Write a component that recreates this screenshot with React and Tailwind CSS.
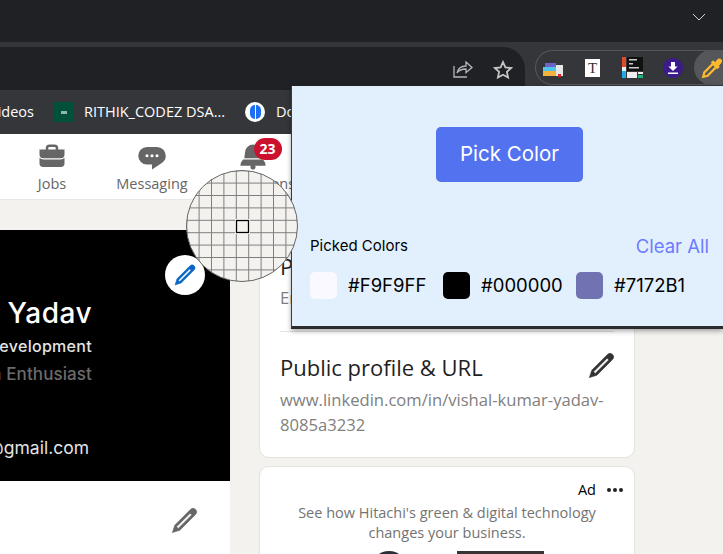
import React from "react";

const pencil = "M21.13 2.86a3 3 0 00-4.17 0l-13 13L2 22l6.19-2L21.13 7a3 3 0 000-4.16zM6.77 18.57l-1.35-1.34L16.64 6 18 7.35z";

const Pencil = ({ className }) => (
  <svg viewBox="0 0 24 24" className={className} fill="currentColor" stroke="currentColor" strokeWidth="0.5">
    <path d={pencil} />
  </svg>
);

const NavItem = ({ width, label, path, badge }) => (
  <div className={`${width} flex flex-col items-center pt-[8px]`}>
    <div className="relative">
      <svg viewBox="0 0 24 24" className="w-[30px] h-[30px] text-[#666666]" fill="currentColor">
        <path d={path} />
      </svg>
      {badge && (
        <span className="absolute -top-[4px] left-[16px] w-[28px] h-[22px] rounded-full bg-[#cb112d] text-white text-[14px] font-bold leading-[22px] text-center">
          {badge}
        </span>
      )}
    </div>
    <span className="text-[14.5px] leading-[20px] mt-[2px] text-[#666666] whitespace-nowrap">{label}</span>
  </div>
);

const Swatch = ({ color, code }) => (
  <div className="w-[133px] shrink-0 flex items-center gap-[11px]">
    <span className="w-[27px] h-[27px] rounded-[5px] shrink-0" style={{ backgroundColor: color }} />
    <span className="text-[18.5px] leading-[27px] text-black">{code}</span>
  </div>
);

const Extensions = () => (
  <div className="ml-[10px] flex-1 h-[35px] mt-[3px] rounded-l-full border border-r-0 border-[#55565a] flex items-center pl-[7px] relative">
    <svg viewBox="0 0 20 16" className="w-[20px] h-[16px] mt-[4px]">
      <rect x="0" y="5" width="13" height="4" fill="#4fc3e8" />
      <rect x="0" y="9" width="13" height="5" fill="#f2b33d" />
      <rect x="2" y="1" width="11" height="4" fill="#6a64c8" />
      <rect x="13" y="3" width="7" height="11" fill="#e6e6e6" />
      <rect x="15" y="12" width="3" height="3" fill="#d8262c" />
    </svg>
    <div className="w-[15px] h-[18px] ml-[22px] bg-white text-[#333333] text-[15px] leading-[18px] text-center" style={{ fontFamily: "'Liberation Serif', serif" }}>
      T
    </div>
    <svg viewBox="0 0 21 21" className="w-[21px] h-[21px] ml-[22px]">
      <rect x="0" y="0" width="4" height="10" fill="#e2492b" />
      <rect x="0" y="10" width="4" height="4" fill="#eeeeee" />
      <rect x="0" y="14" width="4" height="7" fill="#29a9e1" />
      <rect x="5" y="0" width="16" height="14" fill="#111111" />
      <rect x="7" y="2" width="8" height="1.5" fill="#cccccc" />
      <rect x="7" y="6" width="4" height="1.5" fill="#cccccc" />
      <rect x="7" y="10" width="10" height="1.5" fill="#cccccc" />
      <rect x="5" y="15" width="10" height="6" fill="#eeeeee" />
      <rect x="16" y="15" width="5" height="2" fill="#eeeeee" />
      <rect x="16" y="18" width="5" height="3" fill="#1fb57a" />
    </svg>
    <svg viewBox="0 0 20 20" className="w-[20px] h-[20px] ml-[20px]">
      <circle cx="10" cy="10" r="10" fill="#3b1a8c" />
      <path d="M8 4h4v4.500h2.600L10 13 5.400 8.500H8z" fill="#ffffff" />
      <rect x="5" y="14.500" width="10" height="1.500" fill="#ffffff" />
    </svg>
    <div className="absolute right-0 top-[-1px] w-[29px] h-[35px] rounded-l-full bg-[#55565a] flex items-center justify-end">
      <svg viewBox="0 0 20 20" className="w-[22px] h-[22px]" fill="none" stroke="#fbb92d" strokeWidth="2">
        <path d="M2 18l1-4 8-8 3 3-8 8z" />
        <path d="M10 4l6 6" strokeWidth="3" />
        <path d="M13 6l3-3.500a1.500 1.500 0 012 2L15 8" fill="#fbb92d" />
      </svg>
    </div>
  </div>
);

const Magnifier = () => {
  const ticks = [];
  for (let i = -5; i <= 5; i++) ticks.push(56.5 + i * 12.4 - 6.2);
  return (
    <svg viewBox="0 0 112 112" className="absolute left-[186px] top-[170px] w-[112px] h-[112px]">
      <defs>
        <clipPath id="lens">
          <circle cx="56" cy="56" r="55.500" />
        </clipPath>
      </defs>
      <circle cx="56" cy="56" r="55.500" fill="#f3f2ef" />
      <g clipPath="url(#lens)" stroke="#808080" strokeWidth="1">
        {ticks.map((t) => (
          <line key={`v${t}`} x1={t} y1="0" x2={t} y2="112" />
        ))}
        {ticks.map((t) => (
          <line key={`h${t}`} x1="0" y1={t} x2="112" y2={t} />
        ))}
      </g>
      <rect x="50.500" y="50.500" width="12" height="12" fill="#f3f2ef" stroke="#ffffff" strokeWidth="3" />
      <rect x="50.500" y="50.500" width="12" height="12" fill="#f3f2ef" stroke="#000000" strokeWidth="1.300" />
      <circle cx="56" cy="56" r="55.500" fill="none" stroke="#666666" strokeWidth="1" />
    </svg>
  );
};

export default function App() {
  return (
    <div className="relative w-[723px] h-[554px] overflow-hidden flex flex-col bg-[#f3f2ef]" style={{ fontFamily: "'Open Sans', sans-serif" }}>
      {/* browser chrome */}
      <div className="h-[42px] shrink-0 bg-[#202124] flex justify-end">
        <svg viewBox="0 0 14 8" className="w-[14px] h-[8px] mt-[13px] mr-[17px]" fill="none" stroke="#d5d6d8" strokeWidth="1">
          <path d="M1 1l6 6 6-6" />
        </svg>
      </div>
      <div className="h-[48px] shrink-0 bg-[#35363a] pt-[5px] flex">
        <div className="w-[525px] h-[43px] bg-[#202124] rounded-tr-[22px] flex items-start justify-end pr-[12px] pt-[13px] gap-[20px]">
          <svg viewBox="0 0 20 18" className="w-[20px] h-[18px]" fill="none" stroke="#b5b6b8" strokeWidth="1.300">
            <path d="M1 6v11h13" />
            <path d="M4 13c1-5 4-7 9-7V2l6 5.500-6 5V9c-4 0-7 1-9 4z" />
          </svg>
          <svg viewBox="0 0 20 20" className="w-[20px] h-[20px]" fill="none" stroke="#c4c5c7" strokeWidth="1.800">
            <path d="M10 2l2.400 5.400 5.800.6-4.300 3.900 1.200 5.700L10 14.700l-5.100 2.900 1.200-5.700L1.800 8l5.800-.6z" />
          </svg>
        </div>
        <Extensions />
      </div>
      <div className="h-[44px] shrink-0 bg-[#35363a] flex items-center text-[14.5px] text-white whitespace-nowrap">
        <div className="w-[34px] flex justify-end overflow-hidden shrink-0">
          <span>Videos</span>
        </div>
        <div className="w-[20px] h-[20px] ml-[20px] bg-[#00503c] flex items-center justify-center shrink-0">
          <span className="w-[6px] h-[3px] bg-[#8fb8ac]" />
        </div>
        <span className="ml-[10px] w-[141px]">RITHIK_CODEZ DSA...</span>
        <div className="w-[20px] h-[20px] ml-[20px] rounded-full bg-white flex items-center justify-center gap-[1px] shrink-0">
          <span className="w-[5px] h-[14px] rounded-l-full bg-[#1d6ef2]" />
          <span className="w-[5px] h-[14px] rounded-r-full bg-[#1d6ef2]" />
        </div>
        <span className="ml-[11px]">Docs</span>
      </div>

      {/* linkedin page */}
      <div className="h-[66px] bg-white border-b border-[#e8e7e4] flex shrink-0">
        <NavItem
          width="w-[104px]"
          label="Jobs"
          path="M17 6V5a3 3 0 00-3-3h-4a3 3 0 00-3 3v1H2v4a3 3 0 003 3h14a3 3 0 003-3V6zM9 5a1 1 0 011-1h4a1 1 0 011 1v1H9zm10 9a4 4 0 003-1.380V17a3 3 0 01-3 3H5a3 3 0 01-3-3v-4.380A4 4 0 005 14z"
        />
        <NavItem
          width="w-[96px]"
          label="Messaging"
          path="M16 4H8a7 7 0 000 14h4v4l8.160-5.390A6.780 6.780 0 0023 11a7 7 0 00-7-7zm-8 8.250A1.250 1.250 0 119.250 11 1.250 1.250 0 018 12.250zm4 0A1.250 1.250 0 1113.250 11 1.250 1.250 0 0112 12.250zm4 0A1.250 1.250 0 1117.250 11 1.250 1.250 0 0116 12.250z"
        />
        <NavItem
          width="w-[105px]"
          label="Notifications"
          badge="23"
          path="M22 19h-8.280a2 2 0 11-3.440 0H2v-1a4.520 4.520 0 011.170-2.830l1-1.170h15.700l1 1.170A4.420 4.420 0 0122 18zM18.210 7.440A6.270 6.270 0 0012 2a6.270 6.270 0 00-6.210 5.440L5 13h14z"
        />
      </div>

      <div className="flex pt-[30px]">
        <div className="w-[230px] shrink-0">
          <div className="h-[251px] bg-black relative" style={{ fontFamily: "Inter, sans-serif" }}>
            <div className="w-[92px] pt-[65px] flex flex-col items-end overflow-hidden whitespace-nowrap text-white">
              <span className="text-[28px] leading-[36px] font-medium tracking-[0.5px]">Kumar Yadav</span>
              <span className="text-[16px] leading-[22px] mt-[4px] font-medium tracking-[0.3px] text-[#e4e4e4]">Web Development</span>
              <span className="text-[17px] leading-[22px] mt-[6px] font-medium tracking-[0.1px] text-[#6b6b6b]">Tech Enthusiast</span>
              <span className="text-[17.5px] leading-[24px] mt-[51px] mr-[3px] text-[#e4e4e4]">vishal@gmail.com</span>
            </div>
            <div className="absolute left-[165px] top-[25px] w-[40px] h-[40px] rounded-full bg-white flex items-center justify-center">
              <Pencil className="w-[24px] h-[24px] text-[#0a66c2]" />
            </div>
          </div>
          <div className="h-[73px] bg-white flex justify-end pr-[31px] pt-[25px]">
            <Pencil className="w-[29px] h-[29px] text-[#666666]" />
          </div>
        </div>

        <div className="w-[376px] ml-[29px] flex flex-col gap-[8px]">
          <div className="h-[228px] shrink-0 bg-white rounded-[10px] border border-[#e4e3df] px-[20px] pt-[21px]">
            <div className="text-[22px] leading-[28px] text-[#1f1f1f] whitespace-nowrap">Profile language</div>
            <div className="text-[16.5px] leading-[24px] text-[#808080] mt-[6px]">English</div>
            <div className="border-t border-[#e4e3df] mt-[21px]" />
            <div className="flex justify-between items-start mt-[21px]">
              <span className="text-[22px] leading-[28px] text-[#1f1f1f] font-medium">Public profile &amp; URL</span>
              <Pencil className="w-[29px] h-[29px] text-[#333333] mr-[-2px] mt-[-2px]" />
            </div>
            <div className="text-[16.6px] leading-[25px] text-[#808080] mt-[6px] w-[335px] whitespace-nowrap">
              www.linkedin.com/in/vishal-kumar-yadav-<br />8085a3232
            </div>
          </div>
          <div className="h-[100px] shrink-0 bg-white rounded-t-[10px] border border-[#e4e3df] relative overflow-hidden">
            <div className="flex justify-end items-center pr-[11px] pt-[13px] gap-[11px] h-[33px]">
              <span className="text-[14.5px] leading-[20px] text-black">Ad</span>
              <span className="flex gap-[2px]">
                <span className="w-[4px] h-[4px] rounded-full bg-[#222222]" />
                <span className="w-[4px] h-[4px] rounded-full bg-[#222222]" />
                <span className="w-[4px] h-[4px] rounded-full bg-[#222222]" />
              </span>
            </div>
            <p className="text-[14.5px] leading-[20px] text-[#737373] text-center mt-[3px]">
              See how Hitachi's green &amp; digital technology<br />changes your business.
            </p>
            <div className="flex justify-center items-start gap-[50px] mt-[8px] pl-[21px]">
              <span className="w-[36px] h-[36px] rounded-full bg-[#2b2f3a]" />
              <span className="w-[87px] h-[36px] bg-[#3a3535]" />
            </div>
          </div>
        </div>
      </div>

      {/* picker popup */}
      <div className="absolute left-[291px] top-[86px] w-[432px] h-[243px] bg-[#e2f0fd] border-l border-b-[3px] border-l-[#3a3b3f] border-b-[#2b2c30] shadow-[0_2px_5px_rgba(0,0,0,0.35)] pl-[18px] pr-[14px]" style={{ fontFamily: "Inter, sans-serif" }}>
        <div className="flex justify-center pt-[41px]">
          <button className="w-[147px] h-[55px] rounded-[5px] bg-[#5372f0] text-white text-[20.5px]">Pick Color</button>
        </div>
        <div className="flex justify-between items-center mt-[52px]">
          <span className="text-[15px] leading-[24px] text-black">Picked Colors</span>
          <span className="text-[18.5px] leading-[24px] text-[#6c7bff]">Clear All</span>
        </div>
        <div className="flex mt-[14px]">
          <Swatch color="#f9f9ff" code="#F9F9FF" />
          <Swatch color="#000000" code="#000000" />
          <Swatch color="#7172b1" code="#7172B1" />
        </div>
      </div>

      <Magnifier />
    </div>
  );
}
